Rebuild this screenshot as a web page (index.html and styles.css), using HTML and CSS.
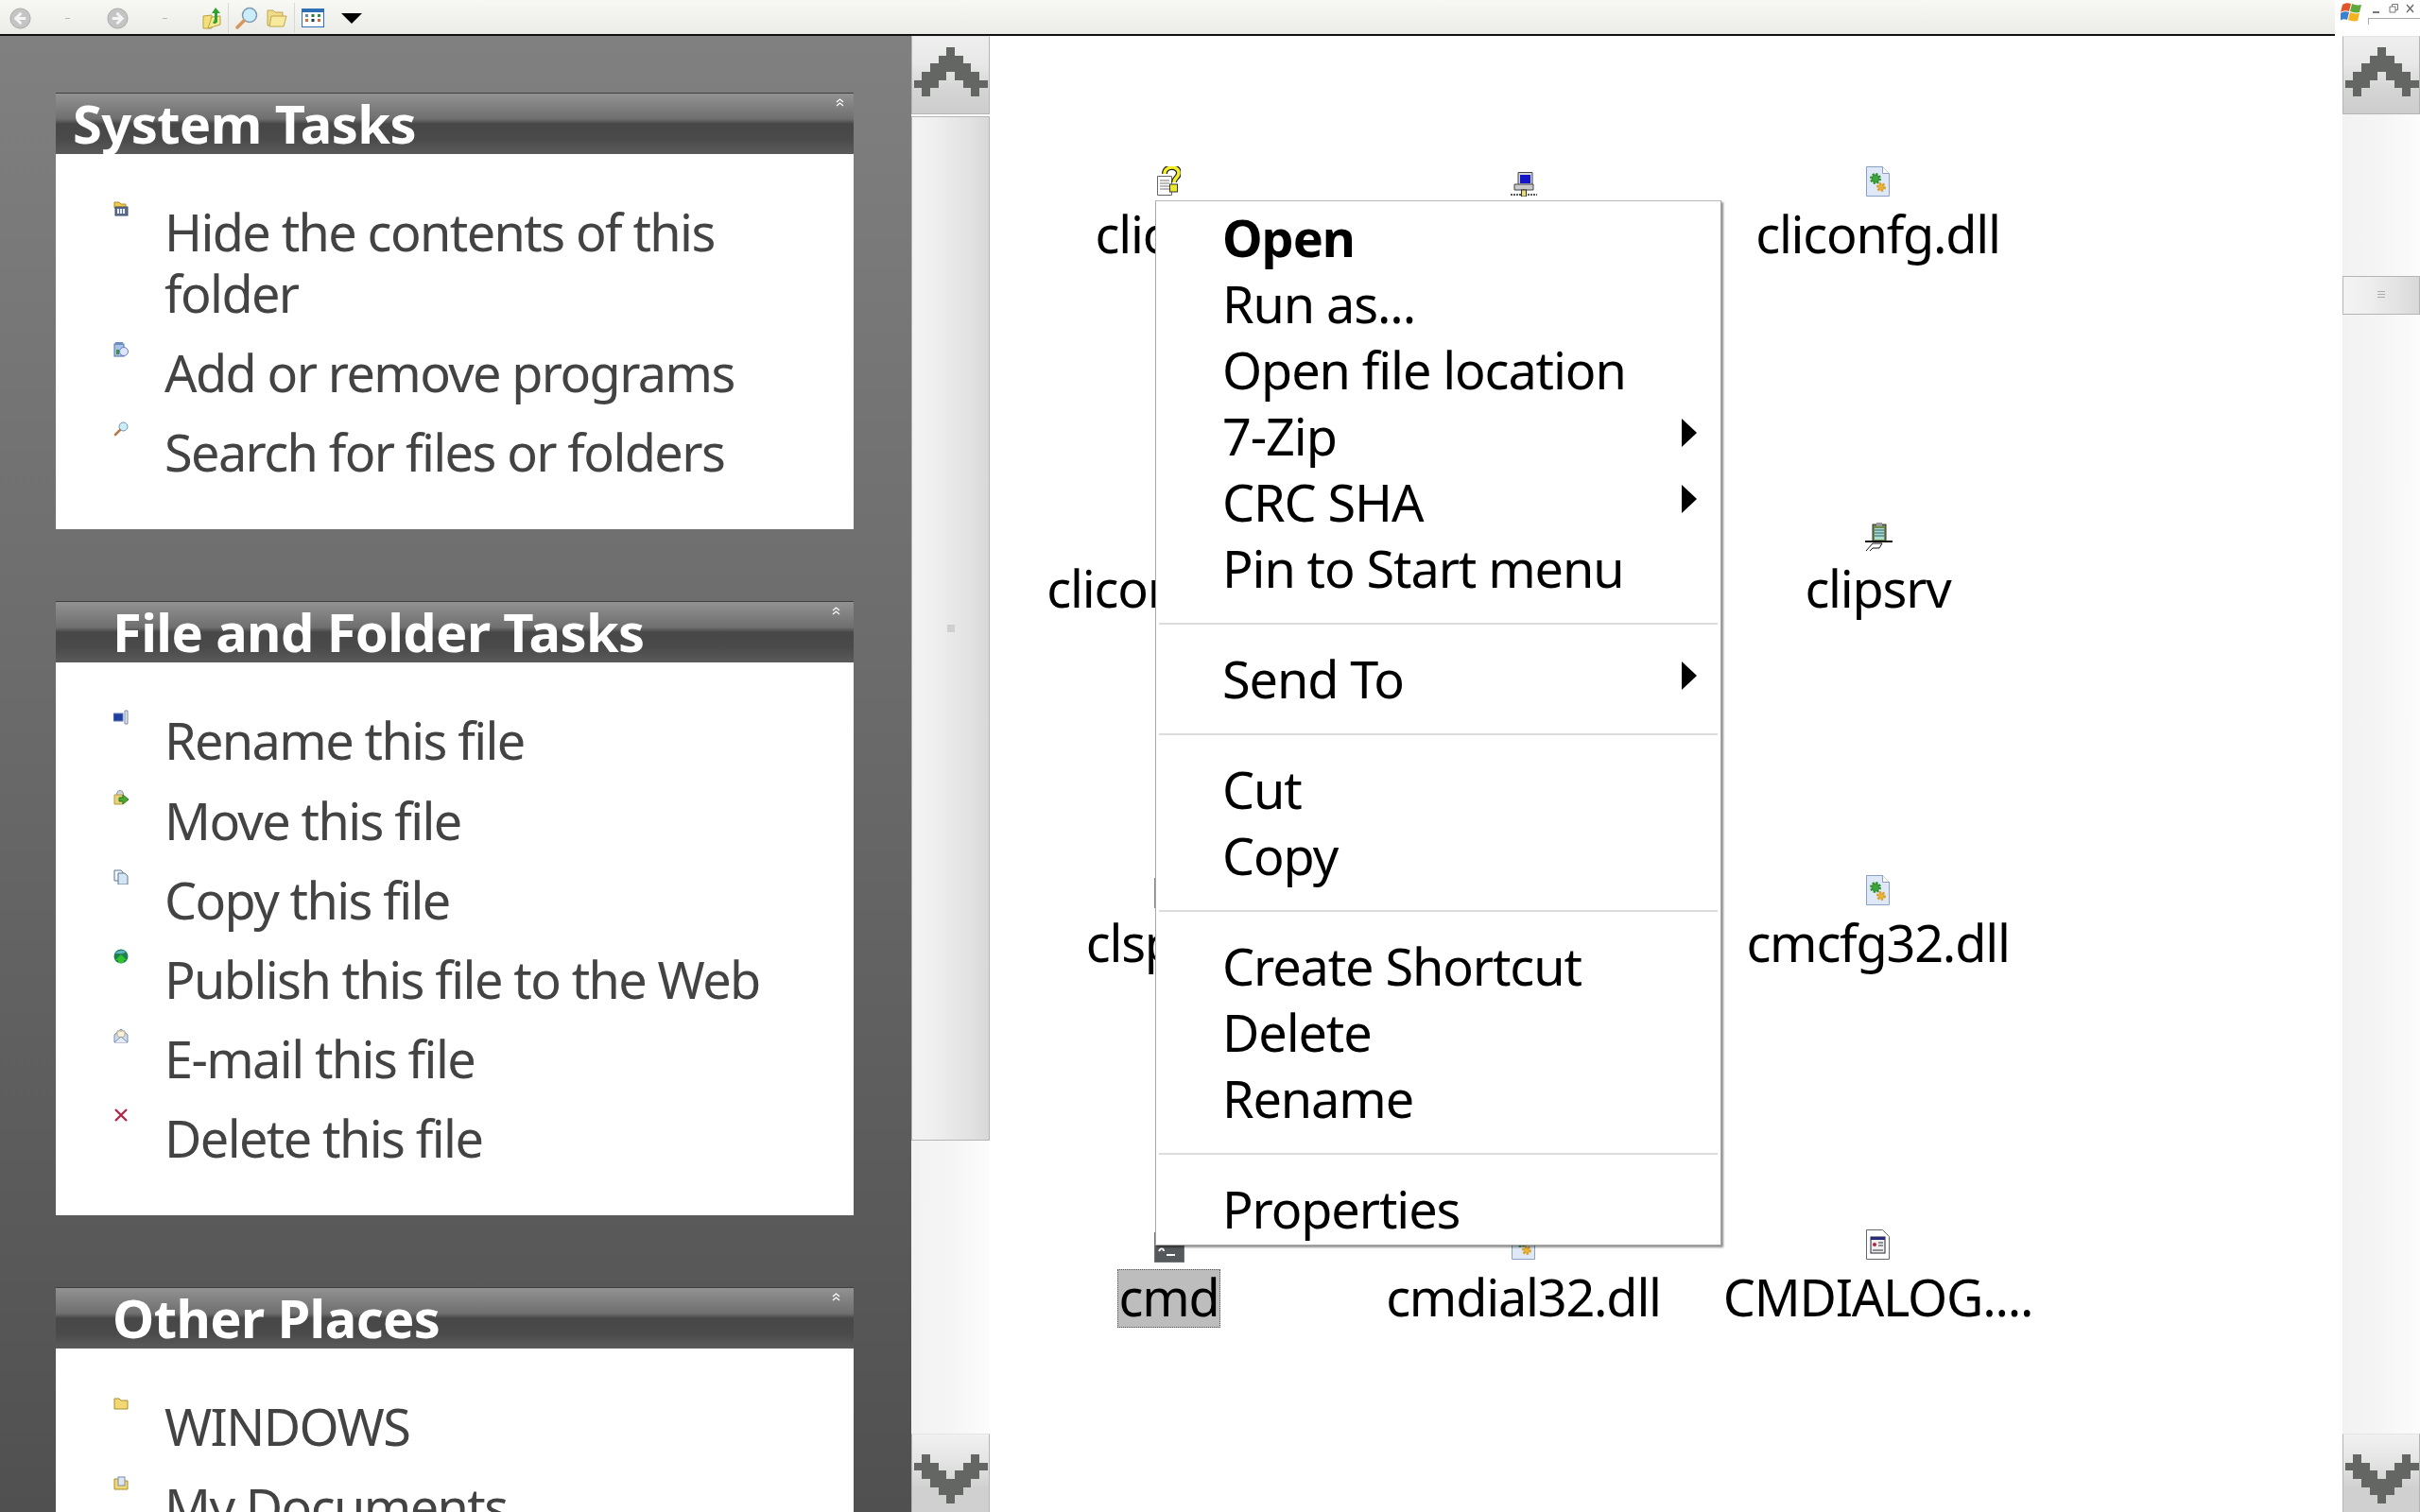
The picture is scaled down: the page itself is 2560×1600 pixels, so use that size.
FILE: index.html
```html
<!DOCTYPE html>
<html lang="en">
<head>
<meta charset="utf-8">
<title>Explorer</title>
<link rel="stylesheet" href="styles.css">
</head>
<body>
<svg class="defs" width="0" height="0" aria-hidden="true">
  <symbol id="chev" viewBox="0 0 9 6"><path shape-rendering="crispEdges" fill="#636663" d="M4 0h1v1h1v1h1v1h1v1h1v1H8v1H7V5H6V4H5V3H4v1H3v1H2v1H1V5H0V4h1V3h1V2h1V1h1z"/></symbol>
  <symbol id="dll" viewBox="0 0 25 32"><path d="M.5.5h17l7 7v24H.5z" fill="#dfe8f6" stroke="#8aa0c4"/><path d="M17.5.5v7h7" fill="#fff" stroke="#8aa0c4"/><circle cx="10" cy="13" r="4.500" fill="#3fa33f" stroke="#2f8f2f" stroke-width="3" stroke-dasharray="2 1.500"/><circle cx="16" cy="22" r="3.500" fill="#e6b53c" stroke="#d99f2a" stroke-width="3" stroke-dasharray="2 1.500"/></symbol>
  <symbol id="dbl" viewBox="0 0 9 9"><path d="M1 4l3.500-3L8 4M1 8l3.500-3L8 8" fill="none" stroke="#fff" stroke-width="1.300"/></symbol>
</svg>

<header class="topbar">
  <div class="toolbar">
    <svg class="tb-nav" viewBox="0 0 24 24"><circle cx="12" cy="12" r="11" fill="#c4c4c4" stroke="#a8a8a8"/><path d="M13 6l-6 6 6 6M7 12h11" fill="none" stroke="#f4f4f4" stroke-width="3"/></svg>
    <span class="tb-dash"></span>
    <svg class="tb-nav tb-next" viewBox="0 0 24 24"><circle cx="12" cy="12" r="11" fill="#c4c4c4" stroke="#a8a8a8"/><path d="M11 6l6 6-6 6M17 12H6" fill="none" stroke="#f4f4f4" stroke-width="3"/></svg>
    <span class="tb-dash"></span>
    <svg class="tb-up" viewBox="0 0 20 24"><path d="M1 10l9-1v14l-9 0z" fill="#f3e07a" stroke="#b9a244"/><path d="M6 23l13-4V10L10 11z" fill="#f6e88e" stroke="#b9a244"/><path d="M10 7l4-6 5 6h-3v9c-2 3-4 2-5 1 1-1 2-3 2-5V7z" fill="#2fa32f"/></svg>
    <span class="tb-sep"></span>
    <svg class="tb-search" viewBox="0 0 24 24"><circle cx="15" cy="9" r="7.500" fill="#c9eefa" stroke="#7f9bb0" stroke-width="1.500"/><path d="M9 15L2 22" stroke="#d9955a" stroke-width="3.500" stroke-linecap="round"/></svg>
    <svg class="tb-folder" viewBox="0 0 22 22"><path d="M1 3h6l2 2h8v14H1z" fill="#efdc8a" stroke="#bfa64a"/><path d="M5 9h16l-3 11H3z" fill="#f8ea9c" stroke="#bfa64a"/></svg>
    <span class="tb-sep tb-sep2"></span>
    <svg class="tb-views" viewBox="0 0 24 20"><rect x=".5" y=".5" width="23" height="19" fill="#fff" stroke="#2f6fb4"/><rect x="1" y="1" width="22" height="3" fill="#2f6fb4"/><path d="M4 6h3v3H4z" fill="#6b88b5"/><path d="M10.500 6h3v3h-3z" fill="#2b7a3e"/><path d="M17 6h3v3h-3z" fill="#2f8f4a"/><path d="M4 11h3v3H4z" fill="#d46b3c"/><path d="M10.500 11h3v3h-3z" fill="#22384f"/><path d="M17 11h3v3h-3z" fill="#c96a3a"/></svg>
    <span class="tb-caret"></span>
  </div>
  <div class="winctl">
    <svg class="winlogo" viewBox="0 0 24 22"><path d="M2 3c3-2 6-2 9-1l-2 8c-3-1-6-1-9 1z" fill="#e2522b"/><path d="M12 2c3 1 6 2 10 1l-2 8c-4 1-7 0-10-1z" fill="#5fa83b"/><path d="M0 12c3-2 6-2 9-1l-2 8c-3-1-5-1-8 1z" fill="#3b7fd0"/><path d="M10 11c3 1 6 2 10 1l-2 8c-4 1-7 0-10-1z" fill="#f4b21f"/></svg>
    <svg class="winglyphs" viewBox="0 0 44 12"><path d="M0 9h7" stroke="#777" stroke-width="2"/><path d="M18 3h6v6h-6zM20.500 3V.5h6v6h-2.500" fill="none" stroke="#777"/><path d="M36 1l7 8M43 1l-7 8" stroke="#666" stroke-width="1.300"/></svg>
    <span class="winfield"></span>
  </div>
</header>

<main class="shell">
  <aside class="sidebar">
    <section class="panel panel-first">
      <h2 class="panel-head"><span class="panel-title">System Tasks</span><svg class="panel-toggle"><use href="#dbl"/></svg></h2>
      <ul class="panel-body">
        <li class="task"><svg class="task-icon" viewBox="0 0 16 16"><path d="M1 1h5l2 2h5v4H1z" fill="#f0c94e" stroke="#b08f2a"/><rect x="2" y="6" width="13" height="9" fill="#5d6f8f" stroke="#3f4f6b"/><path d="M4 8h2v5H4zM7 8h2v5H7zM10 8h2v5h-2z" fill="#e7edf5"/></svg><span>Hide the contents of this folder</span></li>
        <li class="task"><svg class="task-icon" viewBox="0 0 16 16"><rect x="1" y="2" width="10" height="13" fill="#a9c2e8" stroke="#53729f"/><rect x="2" y="0" width="8" height="3" fill="#6f8fc0"/><path d="M3 8h3v5H3z" fill="#3f8f4a"/><circle cx="11" cy="10" r="4.500" fill="#dfe6fb" stroke="#6a78c9"/></svg><span>Add or remove programs</span></li>
        <li class="task"><svg class="task-icon" viewBox="0 0 16 16"><circle cx="10.500" cy="5.500" r="4.500" fill="#c9eefa" stroke="#6f93a8"/><path d="M7 9l-5 5" stroke="#b57b4a" stroke-width="2.500" stroke-linecap="round"/></svg><span>Search for files or folders</span></li>
      </ul>
    </section>
    <section class="panel">
      <h2 class="panel-head"><span class="panel-title">File and Folder Tasks</span><svg class="panel-toggle"><use href="#dbl"/></svg></h2>
      <ul class="panel-body">
        <li class="task"><svg class="task-icon" viewBox="0 0 16 16"><rect x="0" y="4" width="10" height="8" fill="#1f3f9f" stroke="#5f7ab0"/><path d="M12 1h3v14h-3z" fill="#dfe6ef" stroke="#7f8aa0"/></svg><span>Rename this file</span></li>
        <li class="task"><svg class="task-icon" viewBox="0 0 16 16"><circle cx="7" cy="4" r="3.500" fill="#cfd6dc" stroke="#8f98a2"/><path d="M1 5h9v10H1z" fill="#e9d27a" stroke="#b09a4a"/><path d="M6 8h4V5l6 5-6 5v-3H6z" fill="#49a82f" stroke="#2d7a1c"/></svg><span>Move this file</span></li>
        <li class="task"><svg class="task-icon" viewBox="0 0 16 16"><path d="M1 1h7l2 2v9H1z" fill="#f3f6fb" stroke="#5f7593"/><path d="M5 4h7l3 3v9H5z" fill="#d3e6f4" stroke="#5f7593"/></svg><span>Copy this file</span></li>
        <li class="task"><svg class="task-icon" viewBox="0 0 16 16"><circle cx="8" cy="8" r="7.500" fill="#1f7f4f"/><path d="M2 5c3-4 8-4 11-2-2 3-7 2-11 2z" fill="#5fb2c9"/><path d="M8 6l6 6h-3v3H5v-3H2z" fill="#2fc32f"/></svg><span>Publish this file to the Web</span></li>
        <li class="task"><svg class="task-icon" viewBox="0 0 16 16"><path d="M1 7l7-6 7 6v8H1z" fill="#cfdcf0" stroke="#7a8cae"/><path d="M4 3h8v5l-4 3-4-3z" fill="#f8f2dc" stroke="#b0a888"/><path d="M1 15l7-6 7 6" fill="#e4ecf8" stroke="#7a8cae"/></svg><span>E-mail this file</span></li>
        <li class="task"><svg class="task-icon" viewBox="0 0 16 16"><path d="M2 2l12 12M14 2L2 14" stroke="#b22a4a" stroke-width="2.400"/></svg><span>Delete this file</span></li>
      </ul>
    </section>
    <section class="panel">
      <h2 class="panel-head"><span class="panel-title">Other Places</span><svg class="panel-toggle"><use href="#dbl"/></svg></h2>
      <ul class="panel-body">
        <li class="task"><svg class="task-icon" viewBox="0 0 16 16"><path d="M1 3h5l2 2h7v9H1z" fill="#f2d873" stroke="#a98d2f"/></svg><span>WINDOWS</span></li>
        <li class="task"><svg class="task-icon" viewBox="0 0 16 16"><path d="M1 3h5l2 2h7v9H1z" fill="#f2d873" stroke="#a98d2f"/><rect x="5" y="1" width="7" height="9" fill="#dfe6f2" stroke="#7a8cae"/></svg><span>My Documents</span></li>
      </ul>
    </section>
  </aside>

  <div class="scroll scroll-left">
    <div class="sb-btn"><svg class="chev"><use href="#chev"/></svg></div>
    <div class="sb-thumb sb-thumb-long"><span class="grip"></span></div>
    <div class="sb-track"></div>
    <div class="sb-btn sb-btn-down"><svg class="chev chev-down"><use href="#chev"/></svg></div>
  </div>

  <div class="content">
    <div class="files">
      <div class="file"><svg class="file-icon" viewBox="0 0 25 32"><path d="M.5 10.500h15v20H.5z" fill="#fff" stroke="#666"/><path d="M3 15h10M3 18h10M3 21h10M3 24h10" stroke="#777"/><path d="M8 8c0-9 15-9 15-1 0 5-5 5-5 10" fill="none" stroke="#222" stroke-width="6"/><path d="M8 8c0-9 15-9 15-1 0 5-5 5-5 10" fill="none" stroke="#f2ef2a" stroke-width="3.500"/><rect x="13.500" y="19" width="8" height="8" fill="#e9e92a" stroke="#333"/></svg><span class="file-name">cliconf</span></div>
      <div class="file"><svg class="file-icon file-icon-net" viewBox="0 0 28 26"><path d="M8 .5h15v14H8z" fill="#cfd4dc" stroke="#444"/><rect x="10" y="3" width="11" height="9" fill="#1414c8"/><path d="M4 13h20v6H4z" fill="#c9c9c9" stroke="#444"/><path d="M0 24h28" stroke="#222" stroke-dasharray="2 1" stroke-width="1.500"/><rect x="11.500" y="19" width="5" height="7" fill="#e6dc7a" stroke="#333"/></svg><span class="file-name">clbcatq.dll</span></div>
      <div class="file"><svg class="file-icon"><use href="#dll"/></svg><span class="file-name">cliconfg.dll</span></div>

      <div class="file"><svg class="file-icon"><use href="#dll"/></svg><span class="file-name">clicomp.dll</span></div>
      <div class="file"><svg class="file-icon"><use href="#dll"/></svg><span class="file-name">clipbrd</span></div>
      <div class="file"><svg class="file-icon file-icon-srv" viewBox="0 0 30 30"><rect x="9" y="2" width="14" height="18" fill="#6f8a4a" stroke="#333"/><rect x="11" y="6" width="10" height="12" fill="#a9dcd2"/><path d="M11 8h10M11 11h10M11 14h10" stroke="#2d5f6a"/><rect x="13" y="0" width="6" height="4" fill="#9a9a9a"/><path d="M1 20h29" stroke="#111" stroke-width="2"/><path d="M2 30l7-8h10l-3 5h-7l-3 3" fill="none" stroke="#111"/></svg><span class="file-name">clipsrv</span></div>

      <div class="file"><svg class="file-icon file-icon-cmd" viewBox="0 0 32 32"><rect x=".5" y=".5" width="31" height="31" fill="#fff" stroke="#888"/></svg><span class="file-name">clspack</span></div>
      <div class="file"><svg class="file-icon"><use href="#dll"/></svg><span class="file-name">clusapi.dll</span></div>
      <div class="file"><svg class="file-icon"><use href="#dll"/></svg><span class="file-name">cmcfg32.dll</span></div>

      <div class="file"><svg class="file-icon file-icon-cmd" viewBox="0 0 32 32"><rect width="32" height="32" fill="#56595c" stroke="#8a8a8a"/><path d="M5 20c2-4 5-3 5 0M13 24h9" fill="none" stroke="#fff" stroke-width="2"/></svg><span class="file-name file-name-selected">cmd</span></div>
      <div class="file"><svg class="file-icon"><use href="#dll"/></svg><span class="file-name">cmdial32.dll</span></div>
      <div class="file"><svg class="file-icon" viewBox="0 0 25 32"><path d="M.5.500h17l7 7v24H.5z" fill="#fff" stroke="#666"/><rect x="5" y="8" width="15" height="17" fill="#eee" stroke="#223"/><rect x="5" y="8" width="15" height="3" fill="#2a2a7a"/><circle cx="9" cy="16" r="2" fill="#b02040"/><path d="M13 14h5M13 17h5M7 22h11" stroke="#333"/></svg><span class="file-name">CMDIALOG....</span></div>
    </div>

    <nav class="menu">
      <div class="menu-item menu-item-default">Open</div>
      <div class="menu-item">Run as...</div>
      <div class="menu-item">Open file location</div>
      <div class="menu-item menu-item-sub">7-Zip</div>
      <div class="menu-item menu-item-sub">CRC SHA</div>
      <div class="menu-item">Pin to Start menu</div>
      <hr class="menu-sep">
      <div class="menu-item menu-item-sub">Send To</div>
      <hr class="menu-sep">
      <div class="menu-item">Cut</div>
      <div class="menu-item">Copy</div>
      <hr class="menu-sep">
      <div class="menu-item">Create Shortcut</div>
      <div class="menu-item">Delete</div>
      <div class="menu-item">Rename</div>
      <hr class="menu-sep">
      <div class="menu-item">Properties</div>
    </nav>
  </div>

  <div class="scroll scroll-right">
    <div class="sb-btn"><svg class="chev"><use href="#chev"/></svg></div>
    <div class="sb-track sb-track-a"></div>
    <div class="sb-thumb sb-thumb-short"><span class="grip grip-lines"></span></div>
    <div class="sb-track"></div>
    <div class="sb-btn sb-btn-down"><svg class="chev chev-down"><use href="#chev"/></svg></div>
  </div>
</main>
</body>
</html>
```
FILE: styles.css
```css
* { box-sizing: border-box; }
html, body { margin: 0; padding: 0; height: 1600px; overflow: hidden; background: #fff; }
body { font-family: "Noto Sans", "DejaVu Sans", sans-serif; }
.defs { position: absolute; }

/* top bar */
.topbar { display: flex; height: 38px; }
.toolbar {
  width: 2470px; height: 38px; display: flex; align-items: center; padding: 2px 0 0 10px;
  background: linear-gradient(#f8f8f5, #ebebe7);
  border-bottom: 2px solid #111;
}
.tb-nav { width: 23px; height: 23px; flex: none; }
.tb-dash { width: 5px; height: 1px; background: #b5b5b5; margin: 0 39px 0 36px; flex: none; }
.tb-up { width: 20px; height: 24px; margin-left: -2px; flex: none; }
.tb-sep { width: 1px; height: 32px; background: #d8d8d4; margin: 0 7px 0 7px; flex: none; }
.tb-search { width: 24px; height: 24px; flex: none; }
.tb-folder { width: 22px; height: 22px; margin-left: 9px; flex: none; }
.tb-sep2 { margin: 0 7px 0 7px; }
.tb-views { width: 24px; height: 20px; flex: none; }
.tb-caret {
  width: 0; height: 0; margin-left: 18px; flex: none;
  border-left: 11px solid transparent; border-right: 11px solid transparent; border-top: 11px solid #000;
}
.winctl { flex: 1; position: relative; background: #fff; }
.winlogo { position: absolute; left: 6px; top: 2px; width: 24px; height: 22px; }
.winglyphs { position: absolute; left: 40px; top: 4px; width: 44px; height: 12px; }
.winfield { position: absolute; left: 35px; top: 19px; right: 0; height: 7px; border-top: 1px solid #aaa; border-left: 1px solid #aaa; }

/* shell */
.shell { display: flex; height: 1562px; }

/* sidebar */
.sidebar {
  width: 964px; flex: none; height: 1562px; overflow: hidden; padding: 60px 61px 0 59px;
  background: linear-gradient(#808080, #505050);
}
.panel { margin-bottom: 76px; }
.panel-head {
  position: relative; height: 65px; margin: 0; overflow: hidden; padding-left: 60px;
  color: #fff; font-size: 56px; font-weight: 700; line-height: 63px; letter-spacing: -.6px;
  border-top: 1px solid #3f3f3f;
  background: linear-gradient(#929292 0, #6f6f6f 42%, #474747 50%, #4a4a4a 75%, #5a5a5a 100%);
}
.panel-first .panel-head { padding-left: 18px; }
.panel-title { white-space: nowrap; }
.panel-toggle { position: absolute; right: 14px; top: 5px; width: 9px; height: 9px; }
.panel-first .panel-toggle { right: 10px; }
.panel-body {
  list-style: none; margin: 0; padding: 50px 50px 49px 61px;
  background: #fff; display: flex; flex-direction: column; gap: 19.2px;
}
.task {
  display: flex; gap: 38px; color: #434343; font-size: 54px; line-height: 65px; letter-spacing: -1.6px;
}
.task-icon { width: 16px; height: 16px; flex: none; }

/* scrollbars */
.scroll { flex: none; height: 1562px; display: flex; flex-direction: column; background: #fff; }
.scroll-left { width: 84px; padding-right: 1px; }
.scroll-right { width: 82px; }
.sb-btn {
  flex: none; height: 83px; display: flex; justify-content: center; padding-top: 11px;
  background: linear-gradient(#eeeeee, #e8e8e8 35%, #d4d4d4 70%, #cdcdcd);
  border: 1px solid #b5b5b5;
  border-top-color: #e4e4e4;
}
.sb-btn-down { padding-top: 21px; background: linear-gradient(#f1f1f1, #e4e4e4 35%, #d0d0d0 70%); border-bottom: 0; }
.chev { width: 79px; height: 52px; flex: none; }
.chev-down { transform: scaleY(-1); }
.sb-thumb {
  flex: none; display: flex; align-items: center; justify-content: center;
  margin-top: 2px; border: 1px solid #b5b5b5;
  background: linear-gradient(90deg, #f3f3f3 0, #efefef 30%, #e7e7e7 55%, #e2e2e2 75%, #d8d8d8 100%);
}
.sb-thumb-long { height: 1084px; }
.sb-thumb-short { height: 41px; margin-top: 0; }
.sb-track { flex: 1; background: linear-gradient(90deg, #f2f2f2, #f5f5f5 50%, #fcfcfc); }
.sb-track-a { flex: none; height: 171px; }
.grip { width: 8px; height: 8px; background: #cfcfcf; }
.grip-lines { height: 9px; background: repeating-linear-gradient(#aaa 0 1px, transparent 1px 3px); }

/* files */
.content { flex: 1; position: relative; overflow: hidden; background: #fff; }
.files {
  display: grid; grid-template-columns: repeat(3, 375px); grid-auto-rows: 375px;
  padding: 138px 0 0 1px;
}
.file { display: flex; flex-direction: column; align-items: center; }
.file-icon { width: 25px; height: 32px; flex: none; }
.file-icon-net { width: 28px; height: 26px; margin-top: 6px; }
.file-icon-srv { width: 30px; height: 30px; margin-top: 2px; }
.file-icon-cmd { width: 32px; height: 32px; margin: 3px 0 -3px; }
.file-name {
  margin-top: 10px; padding: 0; height: 62px; line-height: 56px;
  font-size: 54px; color: #000; white-space: nowrap; letter-spacing: -1.2px; border: 1px dotted transparent;
}
.file-name-selected { background: #bdbdbd; border-color: #555; }

/* menu */
.menu {
  position: absolute; left: 174px; top: 174px; width: 599px; height: 1106px;
  padding: 3px 3px; background: #fff;
  border: 1px solid #a8a8a8; border-top-color: #b8b8b8;
  box-shadow: 2px 2px 2px rgba(0,0,0,.45);
  color: #000; font-size: 54px; letter-spacing: -1.1px;
}
.menu-item { position: relative; height: 70px; line-height: 70px; padding-left: 67px; white-space: nowrap; }
.menu-item-default { font-weight: 700; }
.menu-item-sub::after {
  content: ""; position: absolute; right: 22px; top: 17px; width: 0; height: 0;
  border-top: 15px solid transparent; border-bottom: 15px solid transparent; border-left: 16px solid #000;
}
.menu-sep { height: 2px; margin: 23px 0 22px; border: 0; background: #dcdcdc; }
```
